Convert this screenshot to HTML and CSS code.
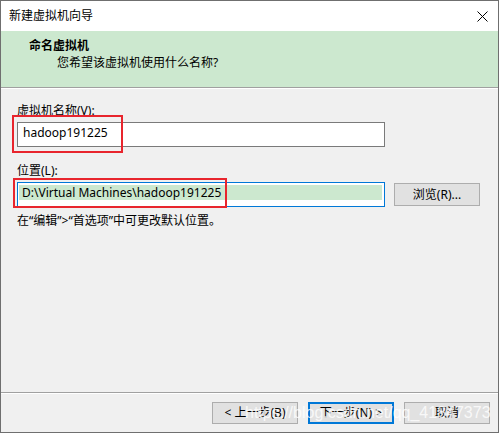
FILE: index.html
```html
<!DOCTYPE html>
<html lang="zh-CN">
<head>
<meta charset="utf-8">
<title>新建虚拟机向导</title>
<link rel="stylesheet" href="styles.css">
</head>
<body>
<div class="window">
  <div class="titlebar">
    <span class="title">新建虚拟机向导</span>
    <svg class="close" width="11" height="11" viewBox="0 0 11 11" aria-hidden="true">
      <path d="M0.5 0.5 L10.5 10.5 M10.5 0.5 L0.5 10.5" stroke="#000" stroke-width="1" fill="none"/>
    </svg>
  </div>
  <div class="header">
    <div class="h-title">命名虚拟机</div>
    <div class="h-sub">您希望该虚拟机使用什么名称?</div>
  </div>
  <div class="rule"></div>
  <div class="content">
    <div class="label">虚拟机名称(V):</div>
    <div class="field field-name"><div class="val">hadoop191225</div></div>
    <div class="label label-loc">位置(L):</div>
    <div class="row">
      <div class="field field-loc"><div class="val sel">D:\Virtual Machines\hadoop191225</div></div>
      <div class="btn btn-browse">浏览(R)...</div>
    </div>
    <div class="hint">在“编辑”&gt;“首选项”中可更改默认位置。</div>
  </div>
  <div class="rule"></div>
  <div class="footer">
    <div class="btn">&lt; 上一步(B)</div>
    <div class="btn btn-default">下一步(N) &gt;</div>
    <div class="btn">取消</div>
  </div>
  <div class="mark mark-name"></div>
  <div class="mark mark-loc"></div>
  <div class="watermark">https://blog.csdn.net/qq_41847373</div>
</div>
</body>
</html>
```
FILE: styles.css
```css
html, body {
  margin: 0;
  padding: 0;
  background: #ffffff;
}
.window {
  position: relative;
  width: 499px;
  height: 433px;
  box-sizing: border-box;
  border: 1px solid #6f6f6f;
  background: #f0f0f0;
  display: flex;
  flex-direction: column;
  font-family: "Noto Sans", "Noto Sans CJK SC", sans-serif;
  font-size: 12px;
  color: #000;
  overflow: hidden;
}
.titlebar {
  height: 30px;
  flex: none;
  background: #ffffff;
  display: flex;
  align-items: center;
  justify-content: space-between;
  padding: 0 10px 0 8px;
}
.title {
  line-height: 16px;
}
.close {
  display: block;
}
.header {
  flex: none;
  height: 56px;
  box-sizing: border-box;
  background: #cce8cf;
  padding: 7px 0 0 28px;
}
.h-title {
  font-weight: bold;
  line-height: 16px;
}
.h-sub {
  margin: 1px 0 0 28px;
  line-height: 16px;
}
.rule {
  flex: none;
  height: 1px;
  background: #a0a0a0;
  border-bottom: 1px solid #ffffff;
}
.content {
  flex: 1;
  padding: 14px 0 0 16px;
}
.label {
  line-height: 16px;
  height: 16px;
}
.label-loc {
  margin-top: 16px;
}
.field {
  box-sizing: border-box;
  width: 368px;
  height: 25px;
  margin-top: 3px;
  background: #ffffff;
  border: 1px solid #7a7a7a;
  padding: 2px 2px 0 2px;
}
.val {
  line-height: 15px;
  height: 15px;
  white-space: nowrap;
}
.field-name .val {
  padding-left: 3px;
}
.field-loc {
  border-color: #0078d7;
  padding-left: 1px;
}
.sel {
  background: #cce8cf;
  padding-left: 3px;
}
.row {
  display: flex;
  align-items: center;
  gap: 9px;
}
.btn {
  box-sizing: border-box;
  width: 86px;
  height: 22px;
  background: #e1e1e1;
  border: 1px solid #adadad;
  display: flex;
  align-items: center;
  justify-content: center;
  line-height: 16px;
  white-space: nowrap;
}
.btn-browse {
  height: 23px;
  margin-top: 3px;
}
.btn-default {
  border: 2px solid #0078d7;
}
.hint {
  margin-top: 6px;
  line-height: 16px;
}
.footer {
  flex: none;
  height: 38px;
  box-sizing: border-box;
  padding: 8px 8px 0 0;
  display: flex;
  justify-content: flex-end;
  gap: 10px;
}
.mark {
  position: absolute;
  box-sizing: border-box;
  border: 2px solid #e8252d;
}
.mark-name {
  left: 11px;
  top: 114px;
  width: 111px;
  height: 38px;
}
.mark-loc {
  left: 12px;
  top: 177px;
  width: 214px;
  height: 30px;
}
.watermark {
  position: absolute;
  left: 244px;
  top: 403px;
  font-family: "Liberation Sans", Arial, sans-serif;
  font-size: 16px;
  line-height: 18px;
  color: rgba(255, 255, 255, 0.8);
  white-space: nowrap;
  pointer-events: none;
}
```
